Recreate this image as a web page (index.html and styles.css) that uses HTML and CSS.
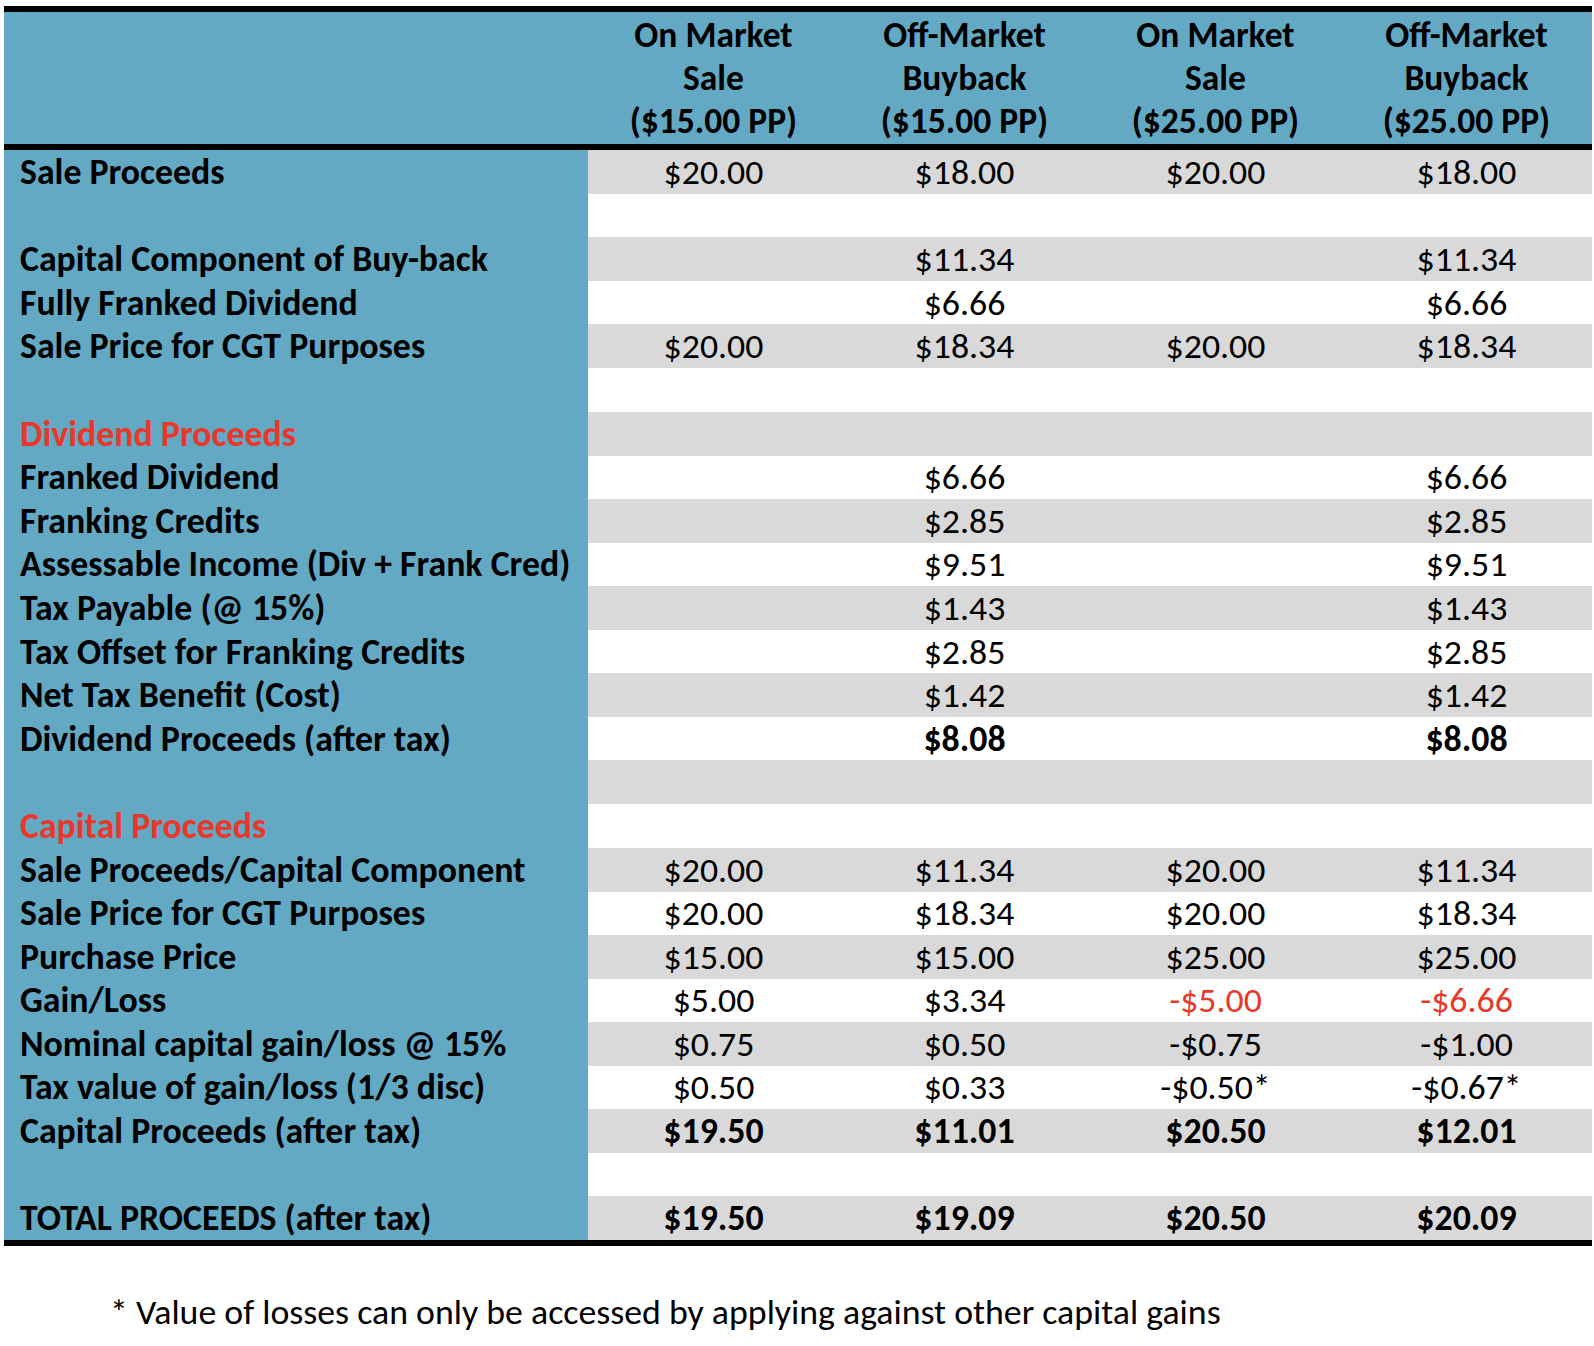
FILE: index.html
```html
<!DOCTYPE html>
<html>
<head>
<meta charset="utf-8">
<link rel="stylesheet" href="styles.css">
</head>
<body>
<div class="sheet">
  <div class="head">
    <div class="hlbl"></div>
    <div class="hcell">On Market<br>Sale<br>($15.00 PP)</div>
    <div class="hcell">Off-Market<br>Buyback<br>($15.00 PP)</div>
    <div class="hcell">On Market<br>Sale<br>($25.00 PP)</div>
    <div class="hcell">Off-Market<br>Buyback<br>($25.00 PP)</div>
  </div>
  <div class="body">
    <div class="row g"><div class="lbl">Sale Proceeds</div><div class="val">$20.00</div><div class="val">$18.00</div><div class="val">$20.00</div><div class="val">$18.00</div></div>
    <div class="row"><div class="lbl"></div><div class="val"></div><div class="val"></div><div class="val"></div><div class="val"></div></div>
    <div class="row g"><div class="lbl">Capital Component of Buy-back</div><div class="val"></div><div class="val">$11.34</div><div class="val"></div><div class="val">$11.34</div></div>
    <div class="row"><div class="lbl">Fully Franked Dividend</div><div class="val"></div><div class="val">$6.66</div><div class="val"></div><div class="val">$6.66</div></div>
    <div class="row g"><div class="lbl">Sale Price for CGT Purposes</div><div class="val">$20.00</div><div class="val">$18.34</div><div class="val">$20.00</div><div class="val">$18.34</div></div>
    <div class="row"><div class="lbl"></div><div class="val"></div><div class="val"></div><div class="val"></div><div class="val"></div></div>
    <div class="row g"><div class="lbl red">Dividend Proceeds</div><div class="val"></div><div class="val"></div><div class="val"></div><div class="val"></div></div>
    <div class="row"><div class="lbl">Franked Dividend</div><div class="val"></div><div class="val">$6.66</div><div class="val"></div><div class="val">$6.66</div></div>
    <div class="row g"><div class="lbl">Franking Credits</div><div class="val"></div><div class="val">$2.85</div><div class="val"></div><div class="val">$2.85</div></div>
    <div class="row"><div class="lbl">Assessable Income (Div + Frank Cred)</div><div class="val"></div><div class="val">$9.51</div><div class="val"></div><div class="val">$9.51</div></div>
    <div class="row g"><div class="lbl">Tax Payable (@ 15%)</div><div class="val"></div><div class="val">$1.43</div><div class="val"></div><div class="val">$1.43</div></div>
    <div class="row"><div class="lbl">Tax Offset for Franking Credits</div><div class="val"></div><div class="val">$2.85</div><div class="val"></div><div class="val">$2.85</div></div>
    <div class="row g"><div class="lbl">Net Tax Benefit (Cost)</div><div class="val"></div><div class="val">$1.42</div><div class="val"></div><div class="val">$1.42</div></div>
    <div class="row"><div class="lbl">Dividend Proceeds (after tax)</div><div class="val"></div><div class="val b">$8.08</div><div class="val"></div><div class="val b">$8.08</div></div>
    <div class="row g"><div class="lbl"></div><div class="val"></div><div class="val"></div><div class="val"></div><div class="val"></div></div>
    <div class="row"><div class="lbl red">Capital Proceeds</div><div class="val"></div><div class="val"></div><div class="val"></div><div class="val"></div></div>
    <div class="row g"><div class="lbl">Sale Proceeds/Capital Component</div><div class="val">$20.00</div><div class="val">$11.34</div><div class="val">$20.00</div><div class="val">$11.34</div></div>
    <div class="row"><div class="lbl">Sale Price for CGT Purposes</div><div class="val">$20.00</div><div class="val">$18.34</div><div class="val">$20.00</div><div class="val">$18.34</div></div>
    <div class="row g"><div class="lbl">Purchase Price</div><div class="val">$15.00</div><div class="val">$15.00</div><div class="val">$25.00</div><div class="val">$25.00</div></div>
    <div class="row"><div class="lbl">Gain/Loss</div><div class="val">$5.00</div><div class="val">$3.34</div><div class="val red">-$5.00</div><div class="val red">-$6.66</div></div>
    <div class="row g"><div class="lbl">Nominal capital gain/loss @ 15%</div><div class="val">$0.75</div><div class="val">$0.50</div><div class="val">-$0.75</div><div class="val">-$1.00</div></div>
    <div class="row"><div class="lbl">Tax value of gain/loss (1/3 disc)</div><div class="val">$0.50</div><div class="val">$0.33</div><div class="val">-$0.50*</div><div class="val">-$0.67*</div></div>
    <div class="row g"><div class="lbl">Capital Proceeds (after tax)</div><div class="val b">$19.50</div><div class="val b">$11.01</div><div class="val b">$20.50</div><div class="val b">$12.01</div></div>
    <div class="row"><div class="lbl"></div><div class="val"></div><div class="val"></div><div class="val"></div><div class="val"></div></div>
    <div class="row g"><div class="lbl">TOTAL PROCEEDS (after tax)</div><div class="val b">$19.50</div><div class="val b">$19.09</div><div class="val b">$20.50</div><div class="val b">$20.09</div></div>
  </div>
</div>
<p class="note">* Value of losses can only be accessed by applying against other capital gains</p>
</body>
</html>
```
FILE: styles.css
```css
html, body {
  margin: 0;
  padding: 0;
  background: #ffffff;
}
body {
  font-family: "Carlito", "Lato", "Liberation Sans", sans-serif;
  color: #000000;
}
.sheet {
  margin: 6px 2px 0 4px;
  width: 1588px;
  border-top: 6px solid #000;
  border-bottom: 6px solid #000;
}
.head {
  display: grid;
  grid-template-columns: 584px repeat(4, 1fr);
  height: 132px;
  background: #63a9c4;
  border-bottom: 6px solid #000;
  font-weight: 700;
  font-size: 35.5px;
  line-height: 43px;
}
.hcell {
  text-align: center;
  padding-top: 2px;
}
.body {
  display: flex;
  flex-direction: column;
}
.row {
  display: grid;
  grid-template-columns: 584px repeat(4, 1fr);
  height: 43.6px;
  font-size: 35.8px;
}
.lbl {
  background: #63a9c4;
  font-weight: 700;
  padding-left: 16px;
  display: flex;
  align-items: center;
  white-space: nowrap;
}
.val {
  display: flex;
  align-items: center;
  justify-content: center;
  white-space: nowrap;
}
.row.g .val {
  background: #d9d9d9;
}
.b {
  font-weight: 700;
}
.red {
  color: #e8382b;
}
.note {
  margin: 46px 0 0 110px;
  font-size: 35.8px;
  line-height: 40px;
}
```
